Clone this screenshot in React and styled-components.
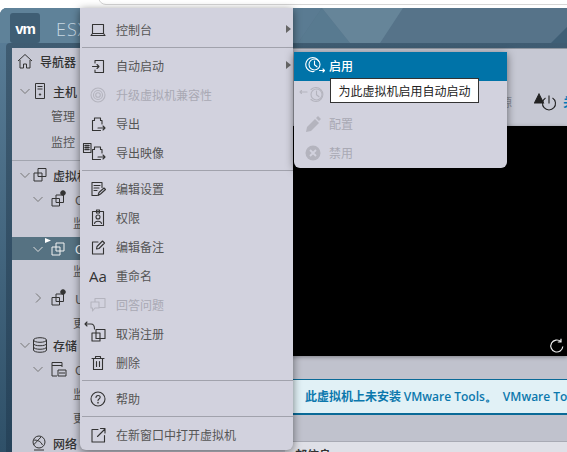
import React from "react";
import styled, { createGlobalStyle } from "styled-components";

const GlobalStyle = createGlobalStyle`
  html, body { margin: 0; padding: 0; background: #fff; }
  body { font-family: "Noto Sans CJK SC", "Noto Sans", sans-serif; overflow: hidden; }
`;

const Page = styled.div`
  position: relative;
  width: 567px;
  height: 452px;
  overflow: hidden;
  background: #fff;
`;

const TopStrip = styled.div`
  height: 8px;
  position: relative;
  background: #fff;
  &::after {
    content: "";
    position: absolute;
    left: 98px;
    right: -10px;
    top: -8px;
    height: 11px;
    border: 1px solid #d6d6d6;
    border-radius: 0 0 0 8px;
    box-sizing: content-box;
  }
`;

const Shell = styled.div`
  display: flex;
  flex-direction: column;
  height: 444px;
  background: linear-gradient(180deg, #5b7f99 0%, #2f5068 100%);
  border-radius: 7px 0 0 0;
  overflow: hidden;
`;

const Header = styled.header`
  height: 35px;
  flex: none;
  position: relative;
  display: flex;
  align-items: center;
  padding-left: 10px;
  gap: 16px;
  color: #c8d8e2;
`;

const HeaderArt = styled.svg`
  position: absolute;
  left: 0;
  top: 0;
`;

const Logo = styled.div`
  position: relative;
  width: 30px;
  height: 30px;
  margin-top: 5px;
  border-radius: 3px;
  background: #3f5e74;
  color: #fff;
  font: 700 15px "Liberation Sans", sans-serif;
  letter-spacing: -1px;
  display: flex;
  align-items: center;
  justify-content: center;
`;

const Brand = styled.span`
  position: relative;
  margin-top: 6px;
  font: 300 18px "Open Sans", sans-serif;
  letter-spacing: 1px;
`;

const Workspace = styled.div`
  flex: 1;
  min-height: 0;
  display: flex;
  margin-left: 6px;
  padding: 5px 0 0 6px;
  background: linear-gradient(180deg, #3f5c72 0%, #26435a 100%);
  border-radius: 4px 0 0 0;
`;

const Sidebar = styled.nav`
  width: 273px;
  flex: none;
  background: #c8c9d5;
  font-size: 12px;
  overflow: hidden;
`;

const NavRow = styled.div`
  height: ${(p) => p.$h || 20}px;
  margin-top: ${(p) => p.$mt || 0}px;
  display: flex;
  align-items: center;
  padding-left: ${(p) => p.$indent || 0}px;
  font-weight: ${(p) => (p.$bold ? 500 : 400)};
  color: ${(p) => (p.$active ? "#fff" : p.$bold ? "#333" : "#555")};
  background: ${(p) => (p.$active ? "#567282" : "transparent")};
  white-space: nowrap;
  opacity: 0.999;
  & > * { flex: none; }
`;

const NavRule = styled.div`
  height: 1px;
  margin-top: 9px;
  background: #a2a5af;
`;

const NavText = styled.span`
  margin-left: ${(p) => p.$gap || 0}px;
`;

const ChevronBox = styled.svg`
  margin-right: ${(p) => p.$gap || 2}px;
`;

const TreeIcon = styled.svg`
  overflow: visible;
  color: ${(p) => (p.$active ? "#f2f2f2" : "#333")};
`;

const Main = styled.main`
  flex: 1;
  min-width: 0;
  display: flex;
  flex-direction: column;
  background: #c0c2cd;
  overflow: hidden;
`;

const ActionBar = styled.div`
  height: 78px;
  flex: none;
  display: flex;
  align-items: center;
  padding: 28px 0 0 179px;
  background: #c6c8d3;
  border-top: 1px solid #8f96a0;
  box-sizing: border-box;
  font-size: 12px;
  white-space: nowrap;
`;

const ActionLabel = styled.span`
  flex: none;
  color: ${(p) => (p.$primary ? "#0079b8" : "#8a8d98")};
  font-weight: ${(p) => (p.$primary ? 700 : 400)};
  margin-left: ${(p) => p.$gap || 0}px;
  opacity: 0.999;
`;

const PowerIcon = styled.svg`
  flex: none;
  margin-left: 22px;
  color: #222;
`;

const Console = styled.div`
  height: 230px;
  flex: none;
  position: relative;
  background: #000;
  box-shadow: 0 1px 4px rgba(0, 0, 0, 0.35);
`;

const Refresh = styled.svg`
  position: absolute;
  right: 2px;
  bottom: 2px;
`;

const Banner = styled.div`
  margin-top: 23px;
  height: 36px;
  flex: none;
  display: flex;
  align-items: center;
  gap: 6px;
  padding-left: 20px;
  background: #e1f1f6;
  border-top: 1px solid #0a6a97;
  border-bottom: 2px solid #0a6a97;
  box-sizing: border-box;
  color: #0c78ad;
  font-size: 12px;
  font-weight: 700;
  white-space: nowrap;
  & > span { flex: none; opacity: 0.999; }
`;

const Latin = styled.span`
  font-family: "Open Sans", sans-serif;
  font-size: 12px;
  font-weight: 600;
`;

const Footer = styled.div`
  margin-top: 26px;
  flex: 1;
  padding: 4px 0 0 10px;
  background: #dfe0e7;
  border-top: 1px solid #a8aab4;
  font-size: 12px;
  font-weight: 700;
  color: #333;
  white-space: nowrap;
`;

const Menu = styled.ul`
  position: absolute;
  list-style: none;
  margin: 0;
  padding: 0;
  background: #d2d2de;
  box-shadow: 0 2px 8px rgba(0, 0, 0, 0.5);
  box-sizing: border-box;
  border-radius: 0 0 6px 6px;
  font-size: 12px;
`;

const MainMenu = styled(Menu)`
  left: 80px;
  top: 8px;
  width: 213px;
  height: 442px;
  padding-top: 7px;
`;

const SubMenu = styled(Menu)`
  left: 294px;
  top: 52px;
  width: 213px;
  height: 116px;
`;

const Item = styled.li`
  height: 29px;
  display: flex;
  align-items: center;
  padding-left: 10px;
  position: relative;
  color: ${(p) => (p.$disabled ? "#a9a9b4" : "#555")};
  opacity: 0.999;
`;

const SubItem = styled.li`
  height: 29px;
  display: flex;
  align-items: center;
  padding: 0 0 2px 11px;
  box-sizing: border-box;
  color: ${(p) => (p.$selected ? "#fff" : "#a9a9b4")};
  background: ${(p) => (p.$selected ? "#0073a8" : "transparent")};
  font-weight: ${(p) => (p.$selected ? 500 : 400)};
  opacity: 0.999;
`;

const IconSlot = styled.span`
  width: 16px;
  height: 16px;
  margin-right: 10px;
  display: flex;
  align-items: center;
  justify-content: center;
  flex: none;
  color: ${(p) => (p.$disabled ? "#b4b4be" : "#333")};
`;

const SubIconSlot = styled.span`
  width: 24px;
  height: 20px;
  display: flex;
  align-items: center;
  flex: none;
  color: ${(p) => (p.$selected ? "#fff" : "#b4b4be")};
`;

const Arrow = styled.span`
  position: absolute;
  right: 2px;
  top: 10px;
  width: 0;
  height: 0;
  border-left: 5px solid #666;
  border-top: 4.5px solid transparent;
  border-bottom: 4.5px solid transparent;
`;

const Divider = styled.li`
  height: 1px;
  margin: 3px 0 3px 2px;
  background: #a1a2ac;
`;

const Tooltip = styled.div`
  position: absolute;
  left: 330px;
  top: 78px;
  height: 25px;
  width: 149px;
  box-sizing: border-box;
  background: #fff;
  border: 1px solid #333;
  color: #222;
  font-size: 12px;
  display: flex;
  align-items: center;
  justify-content: center;
  white-space: nowrap;
`;

const AaText = styled.span`
  font: 400 15px "Open Sans", sans-serif;
  color: #333;
`;

const Glyph = styled.svg`
  overflow: visible;
  flex: none;
`;

const Ico = ({ children, size = 16, box = 16, fill = "none" }) => (
  <Glyph width={size} height={size} viewBox={`0 0 ${box} ${box}`} fill={fill} stroke="currentColor" strokeWidth="1.1" strokeLinecap="round" strokeLinejoin="round">
    {children}
  </Glyph>
);

const exportPath = "M2.5 14.5V4.5h2V2h6v2.500H12v3.500M2.5 14.500h8M8 12h7M13 10l2 2-2 2";

const icons = {
  laptop: <Ico><rect x="2.500" y="2.500" width="11" height="9" /><path d="M1 13.500h14M2.500 11.500L1 13.500M13.500 11.500l1.500 2" /></Ico>,
  autostart: <Ico><path d="M5 5V2.500h8.500V14.500H5V12M2.500 8.500H9M7 6.500l2 2-2 2" /></Ico>,
  upgrade: <Ico><circle cx="8" cy="8" r="7" /><circle cx="8" cy="8" r="4.500" /><circle cx="8" cy="8" r="2.300" /></Ico>,
  exportVm: <Ico><path d={exportPath} /></Ico>,
  exportImg: <Ico><path d={exportPath} /><rect x="-6.500" y="-1.500" width="7.500" height="9" /><path d="M-5 0.500h4M-5 2.500h4M-5 4.500h4" strokeWidth="1.400" /></Ico>,
  settings: <Ico><path d="M2 1.500h10v5M2 1.500v13h5M4 4.500h6M4 7h5M4 9.500h3M8 14.500l1-3 5-4.500 1.500 1.500-5 4.500z" /></Ico>,
  perms: <Ico><rect x="2.500" y="1.500" width="11" height="14" /><rect x="6.500" y="0" width="3" height="3" /><circle cx="8" cy="7" r="2" /><path d="M4.500 13.500c.5-3 6.500-3 7 0" /></Ico>,
  notes: <Ico><path d="M13.500 9v6h-11V3H8M6.500 10l.5-2.500L12.500 2l2 2L9 9.500z" /></Ico>,
  question: <Ico><path d="M5 1.500h10v9H9M5 1.500V5M1 5h8v6H5l-2.500 3v-3H1z" /></Ico>,
  unregister: <Ico><rect x="6" y="3.500" width="9" height="9" /><rect x="2" y="7" width="8" height="8" /><path d="M-5-2H1c2.500 0 3.500 2 3.500 5M-3-4l-2 2 2 2" /></Ico>,
  trash: <Ico><path d="M2 3.500h12M5.500 3.500V1.500h5v2M3.500 3.500V14.500h9V3.500M6.500 6.500v5M9.500 6.500v5" /></Ico>,
  help: <Ico><circle cx="8" cy="8" r="7" /><path d="M6 6.500c0-2.700 4.200-2.700 4.200-.2 0 1.700-2.200 1.700-2.200 3.200" /><circle cx="8" cy="11.700" r=".3" /></Ico>,
  popout: <Ico><path d="M8 2.500H2V15h12.500V8.500M7.500 9.500L15 2M10.500 1.500h4.500V6" /></Ico>,
  clockOn: <Ico size={20} box={20}><path d="M9 15.500a7 7 0 1 1 5-10" /><circle cx="9.500" cy="8.500" r="5.500" /><path d="M9.500 5v3.800l2.500 2M14.500 14.500h5M18 13l1.500 1.500L18 16" /></Ico>,
  clockOff: <Ico size={20} box={20}><path d="M6 4.500a7 7 0 1 1 0 10" /><circle cx="11.500" cy="9.500" r="5.500" /><path d="M11.500 6v3.800l2.500 2M-5 7H2M-3.500 5.500L-5 7l1.500 1.500" /></Ico>,
  pencil: <Glyph width="20" height="20" viewBox="0 0 20 20" fill="currentColor"><path d="M1 18l1-5 8-8 4 4-8 8zM11 4l2-2 3 3-2 2z" /></Glyph>,
  disable: <Glyph width="20" height="20" viewBox="0 0 20 20"><circle cx="8" cy="10" r="7.500" fill="currentColor" /><path d="M5 7l6 6M11 7l-6 6" stroke="#d2d2de" strokeWidth="1.800" /></Glyph>,
};

const Tree = ({ children, active }) => (
  <TreeIcon $active={active} width="16" height="16" viewBox="0 0 16 16" fill="none" stroke="currentColor" strokeWidth="1" strokeLinejoin="round">
    {children}
  </TreeIcon>
);

const home = <Tree><path d="M1 8l7-6.500L15 8M3 7v8h3.500v-4h3v4H13V7" /></Tree>;
const server = <Tree><rect x="3.500" y="0.500" width="9" height="15" /><path d="M5.500 3.500h5M5.500 6h5" /><circle cx="8" cy="11.500" r=".7" fill="currentColor" /></Tree>;
const vms = <Tree><rect x="6" y="1.500" width="8" height="8" /><rect x="2" y="6" width="8" height="8" /></Tree>;
const vmDot = <Tree><rect x="6" y="4" width="7.500" height="7.500" /><rect x="2" y="7.500" width="7.500" height="7.500" /><circle cx="13" cy="2" r="2.300" fill="currentColor" /></Tree>;
const vmOn = <Tree active><rect x="6" y="2" width="8" height="8" /><rect x="2" y="6" width="8" height="8" /><path d="M-5-3l6 2.500L-5 2z" fill="#fff" stroke="none" /></Tree>;
const db = <Tree><ellipse cx="8" cy="3" rx="6.500" ry="2.300" /><path d="M1.500 3v10c0 3 13 3 13 0V3M1.500 6.500c0 3 13 3 13 0M1.500 10c0 3 13 3 13 0" /></Tree>;
const datastore = <Tree><path d="M2 15V1.500h10V6M2 4.500h10M2 15h5" /><rect x="8" y="9" width="8" height="6" /><path d="M10 11v2M12 11v2M14 11v2" /></Tree>;
const globe = <Tree><circle cx="8" cy="7" r="6" /><path d="M2.500 10L10 2M3 15h10M3 5c4 0 7 1.500 8.500 5" /></Tree>;

const Chevron = ({ dir = "down", color = "#777", gap }) => (
  <ChevronBox $gap={gap} width="10" height="10" viewBox="0 0 10 10" fill="none" stroke={color} strokeWidth="1">
    <path d={dir === "down" ? "M0.500 3l4.500 4.500L9.500 3" : "M3 0.500L7.500 5 3 9.500"} />
  </ChevronBox>
);

const mainMenu = [
  { icon: "laptop", label: "控制台", arrow: true },
  "div",
  { icon: "autostart", label: "自动启动", arrow: true },
  { icon: "upgrade", label: "升级虚拟机兼容性", disabled: true },
  { icon: "exportVm", label: "导出" },
  { icon: "exportImg", label: "导出映像" },
  "div",
  { icon: "settings", label: "编辑设置" },
  { icon: "perms", label: "权限" },
  { icon: "notes", label: "编辑备注" },
  { text: "Aa", label: "重命名" },
  { icon: "question", label: "回答问题", disabled: true },
  { icon: "unregister", label: "取消注册" },
  { icon: "trash", label: "删除" },
  "div",
  { icon: "help", label: "帮助" },
  "div",
  { icon: "popout", label: "在新窗口中打开虚拟机" },
];

const subMenu = [
  { icon: "clockOn", label: "启用", selected: true },
  { icon: "clockOff", label: "" },
  { icon: "pencil", label: "配置" },
  { icon: "disable", label: "禁用" },
];

export default function App() {
  return (
    <Page>
      <GlobalStyle />
      <TopStrip />
      <Shell>
        <Header>
          <HeaderArt width="567" height="35" viewBox="0 0 567 35">
            <rect width="567" height="35" fill="#567389" />
            <polygon points="0,0 130,0 100,35 0,35" fill="#5f8299" />
            <polygon points="293,0 322,0 298,35 293,35" fill="#5a7b92" />
            <polygon points="322,0 298,35 350,35" fill="#587a90" />
            <polygon points="322,0 403,0 380,35 350,35" fill="#668599" />
            <polygon points="567,19 551,35 567,35" fill="#3f5f76" />
          </HeaderArt>
          <Logo>vm</Logo>
          <Brand>ESXi</Brand>
        </Header>
        <Workspace>
          <Sidebar>
            <NavRow $mt={3} $indent={5} $bold>{home}<NavText $gap={7}>导航器</NavText></NavRow>
            <NavRow $mt={10} $indent={8} $bold><Chevron />{server}<NavText $gap={5}>主机</NavText></NavRow>
            <NavRow $mt={4} $indent={39}>管理</NavRow>
            <NavRow $mt={6} $indent={39}>监控</NavRow>
            <NavRule />
            <NavRow $mt={4} $indent={8} $bold><Chevron />{vms}<NavText $gap={5}>虚拟机</NavText></NavRow>
            <NavRow $mt={4} $indent={21}><Chevron gap={7} />{vmDot}<NavText $gap={9}>C</NavText></NavRow>
            <NavRow $mt={3} $indent={61}>监控</NavRow>
            <NavRow $mt={5} $h={23} $indent={21} $active><Chevron gap={7} color="#ddd" />{vmOn}<NavText $gap={9}>C</NavText></NavRow>
            <NavRow $indent={61}>监控</NavRow>
            <NavRow $mt={8} $indent={21}><Chevron gap={7} dir="right" />{vmDot}<NavText $gap={9}>U</NavText></NavRow>
            <NavRow $mt={4} $indent={61}>更多虚拟机</NavRow>
            <NavRow $mt={3} $indent={8} $bold><Chevron />{db}<NavText $gap={5}>存储</NavText></NavRow>
            <NavRow $mt={4} $indent={21}><Chevron gap={7} />{datastore}<NavText $gap={9}>C</NavText></NavRow>
            <NavRow $mt={4} $indent={61}>监控</NavRow>
            <NavRow $mt={4} $indent={61}>更多存储</NavRow>
            <NavRow $mt={6} $indent={19} $bold>{globe}<NavText $gap={6}>网络</NavText></NavRow>
          </Sidebar>
          <Main>
            <ActionBar>
              <ActionLabel>关闭电源</ActionLabel>
              <PowerIcon width="24" height="22" viewBox="0 0 24 22" fill="none" stroke="currentColor" strokeWidth="1.100">
                <path d="M0.500 12l4.500-9 4.500 9z" fill="currentColor" />
                <path d="M11.500 7a6.500 6.500 0 1 0 7 0M15 4.500v8" />
              </PowerIcon>
              <ActionLabel $primary $gap={5}>关闭电源</ActionLabel>
            </ActionBar>
            <Console>
              <Refresh width="16" height="16" viewBox="0 0 16 16" fill="none" stroke="#eee" strokeWidth="1.200">
                <path d="M13.800 8.500a6 6 0 1 1-2-5M12 0.800V4H8.800" />
              </Refresh>
            </Console>
            <Banner>
              <span>此虚拟机上未安装 <Latin>VMware Tools。</Latin></span>
              <Latin>VMware Tools</Latin>
            </Banner>
            <Footer>部信息</Footer>
          </Main>
        </Workspace>
      </Shell>

      <MainMenu>
        {mainMenu.map((m, i) =>
          m === "div" ? (
            <Divider key={i} />
          ) : (
            <Item key={i} $disabled={m.disabled}>
              <IconSlot $disabled={m.disabled}>
                {m.text ? <AaText>{m.text}</AaText> : icons[m.icon]}
              </IconSlot>
              <span>{m.label}</span>
              {m.arrow && <Arrow />}
            </Item>
          )
        )}
      </MainMenu>

      <SubMenu>
        {subMenu.map((m, i) => (
          <SubItem key={i} $selected={m.selected}>
            <SubIconSlot $selected={m.selected}>{icons[m.icon]}</SubIconSlot>
            <span>{m.label}</span>
          </SubItem>
        ))}
      </SubMenu>

      <Tooltip>为此虚拟机启用自动启动</Tooltip>
    </Page>
  );
}
